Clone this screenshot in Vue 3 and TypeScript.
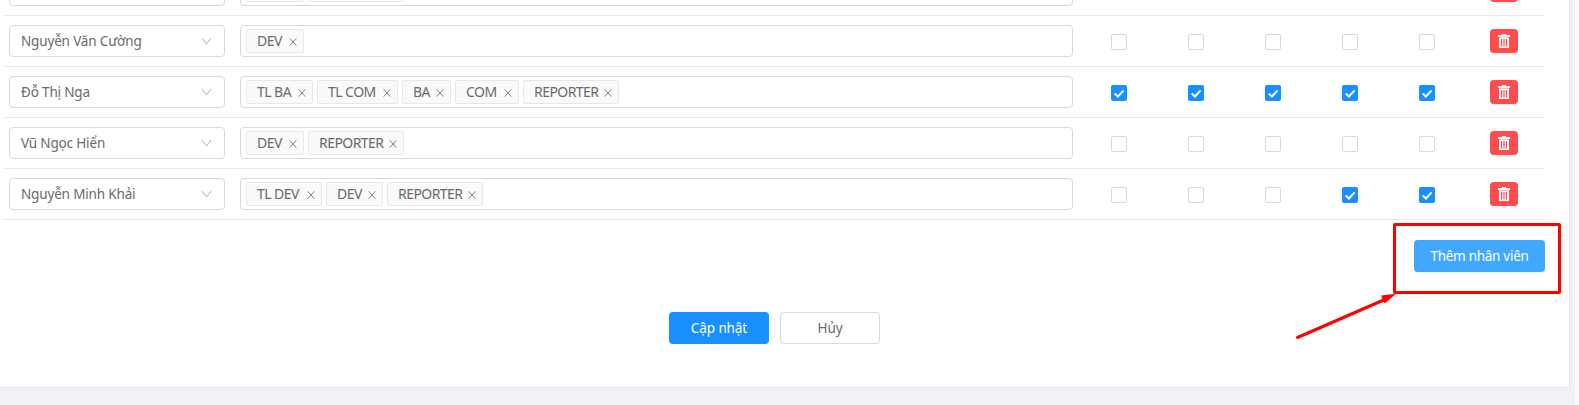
<script setup lang="ts">
interface Tag {
  label: string
  width: number
}

interface Member {
  id: number
  name: string
  tags: Tag[]
  permissions: boolean[]
}

const tag = (label: string, width: number): Tag => ({ label, width })
const none = [false, false, false, false, false]

const members: Member[] = [
  { id: 1, name: '', tags: [tag('', 58), tag('', 96)], permissions: none },
  { id: 2, name: 'Nguyễn Văn Cường', tags: [tag('DEV', 58)], permissions: none },
  {
    id: 3,
    name: 'Đỗ Thị Nga',
    tags: [tag('TL BA', 67), tag('TL COM', 81), tag('BA', 49), tag('COM', 64), tag('REPORTER', 96)],
    permissions: [true, true, true, true, true],
  },
  { id: 4, name: 'Vũ Ngọc Hiển', tags: [tag('DEV', 58), tag('REPORTER', 96)], permissions: none },
  {
    id: 5,
    name: 'Nguyễn Minh Khải',
    tags: [tag('TL DEV', 76), tag('DEV', 57), tag('REPORTER', 96)],
    permissions: [false, false, false, true, true],
  },
]
</script>

<template>
  <div class="page">
    <main class="card">
      <div class="table">
        <div v-for="member in members" :key="member.id" class="row">
          <div class="select">
            <span class="name">{{ member.name }}</span>
            <svg class="chevron" viewBox="0 0 12 8"><path d="M1 .8 6 7 11 .8" /></svg>
          </div>
          <div class="roles">
            <span v-for="(t, i) in member.tags" :key="i" class="tag" :style="{ width: t.width + 'px' }">
              <span class="tag-label">{{ t.label }}</span>
              <svg class="close" viewBox="0 0 8 8"><path d="M.6 .3 7.4 7.7M7.4 .3 .6 7.7" /></svg>
            </span>
          </div>
          <div class="checks">
            <span v-for="(on, i) in member.permissions" :key="i" class="check" :class="{ on }">
              <svg v-if="on" viewBox="0 0 16 16"><path d="M3.7 8.6 6.9 11.5 12.6 5.4" /></svg>
            </span>
          </div>
          <button class="delete" type="button" aria-label="Xóa">
            <svg viewBox="0 0 12 14">
              <path class="solid" d="M4 0h4v1h4v2H0V1h4z" />
              <path class="tint" d="M1 3h10v1.500H1z" />
              <path class="solid" fill-rule="evenodd" d="M1 4h10v10H1zM3 5v7.500h1.200V5zM5.400 5v7.500h1.200V5zM7.800 5v7.500H9V5z" />
            </svg>
          </button>
        </div>
      </div>
      <div class="add-bar">
        <button class="btn add" type="button">Thêm nhân viên</button>
      </div>
      <div class="actions">
        <button class="btn primary" type="button">Cập nhật</button>
        <button class="btn plain" type="button">Hủy</button>
      </div>
    </main>
    <div class="scroll-track"></div>
    <svg class="annotation" viewBox="0 0 1579 405">
      <rect x="1394.5" y="224.500" width="165" height="68" rx=".5" />
      <path class="shaft" d="M1297.500 337.500 1386 299" />
      <path class="head" d="M1396 293.800 1381 295.500 1384.800 303.500z" />
    </svg>
  </div>
</template>

<style>
body {
  margin: 0;
  overflow: hidden;
}
</style>

<style scoped>
.page {
  position: relative;
  box-sizing: border-box;
  width: 1579px;
  height: 405px;
  display: flex;
  align-items: flex-start;
  overflow: hidden;
  background: #f0f2f5;
  color: #6a6a6a;
  font: 14px/22px "Noto Sans", "Open Sans", sans-serif;
}
.card {
  box-sizing: border-box;
  width: 1570px;
  height: 388px;
  flex: none;
  background: #fff;
  border-right: 1px solid #e4e6e8;
  border-bottom: 1px solid #e4e6e8;
}
.scroll-track {
  width: 4px;
  height: 405px;
  margin-left: auto;
  background: #fafafc;
}
.table {
  width: 1541px;
  margin: -35px 0 0 4px;
}
.row {
  box-sizing: border-box;
  height: 51px;
  display: flex;
  align-items: center;
  padding-left: 5px;
  border-bottom: 1px solid #e8e8e8;
}
.select,
.roles {
  box-sizing: border-box;
  height: 32px;
  display: flex;
  align-items: center;
  border: 1px solid #d9d9d9;
  border-radius: 4px;
  background: #fff;
}
.select {
  width: 216px;
  padding: 0 12px 0 11px;
  justify-content: space-between;
}
.name {
  font-size: 13.5px;
  letter-spacing: -0.16px;
  white-space: nowrap;
}
.chevron {
  width: 11px;
  height: 8px;
  margin-left: auto;
  fill: none;
  stroke: #bfbfbf;
  stroke-width: 1.1;
}
.roles {
  width: 833px;
  margin-left: 15px;
  padding: 0 5px;
  gap: 4px;
}
.tag {
  box-sizing: border-box;
  height: 24px;
  display: flex;
  align-items: center;
  justify-content: space-between;
  padding: 0 6px 0 10px;
  border: 1px solid #e8e8e8;
  border-radius: 2px;
  background: #fafafa;
}
.tag-label {
  font-size: 14px;
  letter-spacing: -0.55px;
  white-space: nowrap;
}
.close {
  width: 8px;
  height: 8px;
  flex: none;
  margin: 2px 0 0 auto;
  fill: none;
  stroke: #858585;
  stroke-width: 1;
}
.checks {
  width: 324px;
  margin: 2px 0 0 38px;
  display: flex;
  justify-content: space-between;
}
.check {
  box-sizing: border-box;
  width: 16px;
  height: 16px;
  border: 1px solid #d9d9d9;
  border-radius: 2px;
  background: #fff;
}
.check.on {
  border: 0;
  background: #1890ff;
}
.check svg {
  display: block;
  fill: none;
  stroke: #fff;
  stroke-width: 2;
}
.delete {
  width: 28px;
  height: 24px;
  margin-left: 55px;
  padding: 0;
  display: grid;
  place-items: center;
  border: 0;
  border-radius: 4px;
  background: #ff4d4f;
  box-shadow: 0 2px 0 rgba(0, 0, 0, 0.045);
}
.delete svg {
  width: 12px;
  height: 14px;
}
.solid {
  fill: #fff;
}
.tint {
  fill: #ffb5b6;
}
.add-bar {
  width: 1541px;
  margin: 20px 0 0 4px;
  display: flex;
  justify-content: flex-end;
}
.btn {
  box-sizing: border-box;
  height: 32px;
  padding: 0;
  border: 0;
  border-radius: 4px;
  color: #fff;
  font: 13.5px/30px "Noto Sans", "Open Sans", sans-serif;
  letter-spacing: -0.1px;
  white-space: nowrap;
}
.add {
  width: 131px;
  letter-spacing: -0.28px;
  background: #40a9ff;
  box-shadow: 0 2px 0 rgba(0, 0, 0, 0.045);
}
.actions {
  margin: 40px 0 0 669px;
  display: flex;
  gap: 11px;
}
.primary {
  width: 100px;
  background: #1890ff;
}
.plain {
  width: 100px;
  color: #6a6a6a;
  background: #fff;
  border: 1px solid #d9d9d9;
}
.annotation {
  position: absolute;
  inset: 0;
  width: 1579px;
  height: 405px;
  pointer-events: none;
  fill: none;
  stroke: #f00;
  stroke-width: 3;
  stroke-linecap: round;
}
.annotation .head {
  fill: #f00;
  stroke: none;
}
</style>
